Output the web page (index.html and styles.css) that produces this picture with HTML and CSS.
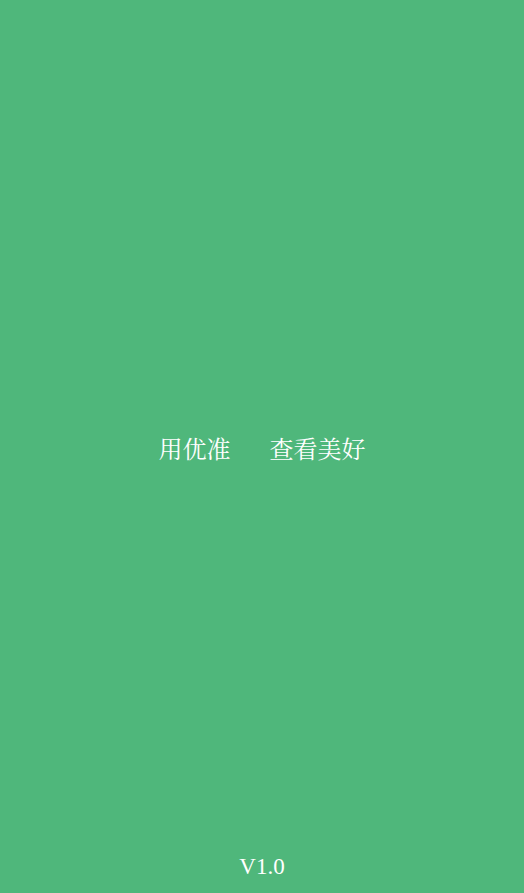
FILE: index.html
```html
<!DOCTYPE html>
<html lang="zh">
<head>
<meta charset="utf-8">
<link rel="stylesheet" href="styles.css">
</head>
<body>
<div class="screen">
  <div class="slogan">
    <span class="part">用优准</span>
    <span class="part">查看美好</span>
  </div>
  <div class="version">V1.0</div>
</div>
</body>
</html>
```

FILE: styles.css
```css
html, body {
  margin: 0;
  padding: 0;
  height: 100%;
}
body {
  background: #4fb77b;
  color: #ffffff;
  font-family: "Liberation Serif", "Noto Serif CJK SC", "Noto Sans CJK SC", serif;
}
.screen {
  height: 100vh;
  display: flex;
  flex-direction: column;
  align-items: center;
}
.slogan {
  flex: 1;
  display: flex;
  align-items: center;
  justify-content: center;
  gap: 39px;
  font-size: 24px;
  padding-top: 40px;
}
.version {
  font-size: 23px;
  padding-bottom: 13px;
  line-height: 26px;
}
```
